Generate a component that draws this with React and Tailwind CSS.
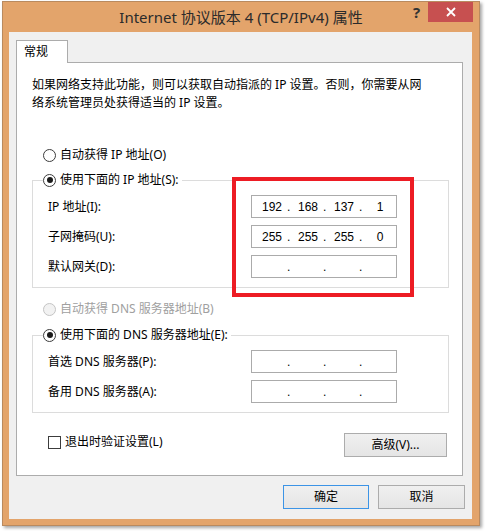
import React from "react";

const Radio = ({ checked, disabled }) => (
	<span
		className={`flex h-[13px] w-[13px] shrink-0 items-center justify-center rounded-full border ${
			disabled ? "border-[#c4c4c4] bg-[#f2f2f2]" : "border-[#3c3c3c] bg-white"
		}`}
	>
		{checked && <span className="h-[6px] w-[6px] rounded-full bg-[#1a1a1a]" />}
	</span>
);

const RadioRow = ({ label, checked, disabled }) => (
	<span className={`flex h-4 items-center gap-[4px] leading-4 ${disabled ? "text-[#a0a0a0]" : "text-black"}`}>
		<Radio checked={checked} disabled={disabled} />
		<span>{label}</span>
	</span>
);

const IpField = ({ value }) => {
	const parts = value ? value.split(".") : ["", "", "", ""];
	return (
		<div className="flex h-[23px] w-[146px] items-center border border-[#ababab] bg-white pl-[9px] font-['Liberation_Sans',sans-serif] text-[12px] text-black">
			{parts.map((p, i) => (
				<React.Fragment key={i}>
					<span className="w-[22px] text-center">{p}</span>
					{i < 3 && <span className="w-[14px] pl-[4px] text-left">.</span>}
				</React.Fragment>
			))}
		</div>
	);
};

const FieldRow = ({ label, value }) => (
	<div className="flex items-center justify-between">
		<span className="leading-4">{label}</span>
		<IpField value={value} />
	</div>
);

const Group = ({ legend, rows }) => (
	<fieldset className="ml-[15px] w-[417px] border border-[#dcdcdc] pb-[9px] pl-[15px] pr-[51px] pt-[7px]">
		<legend className="ml-[-5px] bg-white pr-[3px]">
			<RadioRow label={legend} checked />
		</legend>
		<div className="flex flex-col gap-[7px]">
			{rows.map((r) => (
				<FieldRow key={r.label} label={r.label} value={r.value} />
			))}
		</div>
	</fieldset>
);

const Button = ({ children, width, primary }) => (
	<button
		className={`flex h-[24px] items-center justify-center border bg-gradient-to-b from-[#f0f0f0] to-[#e5e5e5] text-[12px] text-black ${width} ${
			primary ? "border-[#3c94e6]" : "border-[#acacac]"
		}`}
	>
		{children}
	</button>
);

export default function App() {
	return (
		<div className="relative h-[531px] w-[485px] bg-white pl-[2px] pt-[1px] font-['Noto_Sans','Noto_Sans_CJK_SC',sans-serif] text-[12px] text-black">
			<div className="flex h-[525px] w-[478px] flex-col border border-[#b98a5f] bg-[#e3a46b] shadow-[2px_2px_3px_rgba(0,0,0,0.35)]">
				{/* title bar */}
				<div className="flex h-[30px] items-start">
					<div className="w-[74px]" />
					<div className="flex h-[30px] flex-1 items-center justify-center text-[15px] text-[#2b2b2b]">
						Internet 协议版本 4 (TCP/IPv4) 属性
					</div>
					<div className="flex w-[74px] items-start">
						<span className="mt-[1px] w-[23px] text-center text-[15px] font-bold leading-[18px] text-[#333]">?</span>
						<span className="flex h-[20px] w-[45px] items-center justify-center bg-[#c75050]">
							<svg width="10" height="10" viewBox="0 0 10 10">
								<path d="M1 1L9 9M9 1L1 9" stroke="white" strokeWidth="1.8" />
							</svg>
						</span>
					</div>
				</div>

				{/* client */}
				<div className="ml-[6px] flex h-[487px] w-[463px] flex-col bg-[#f0f0f0] pl-[7px] pt-[8px]">
					<div className="relative z-10 -mb-[1px] flex h-[23px] w-[52px] items-center border border-b-0 border-[#acacac] bg-white pl-[7px]">
						常规
					</div>
					<div className="flex h-[414px] w-[447px] flex-col border border-[#acacac] bg-white">
						<p className="ml-[15px] mt-[13px] leading-[18px]">
							如果网络支持此功能，则可以获取自动指派的 IP 设置。否则，你需要从网
							<br />
							络系统管理员处获得适当的 IP 设置。
						</p>

						<div className="ml-[26px] mt-[35px]">
							<RadioRow label="自动获得 IP 地址(O)" />
						</div>
						<div className="mt-[9px]">
							<Group
								legend="使用下面的 IP 地址(S):"
								rows={[
									{ label: "IP 地址(I):", value: "192.168.137.1" },
									{ label: "子网掩码(U):", value: "255.255.255.0" },
									{ label: "默认网关(D):", value: "" },
								]}
							/>
						</div>

						<div className="ml-[26px] mt-[13px]">
							<RadioRow label="自动获得 DNS 服务器地址(B)" disabled />
						</div>
						<div className="mt-[10px]">
							<Group
								legend="使用下面的 DNS 服务器地址(E):"
								rows={[
									{ label: "首选 DNS 服务器(P):", value: "" },
									{ label: "备用 DNS 服务器(A):", value: "" },
								]}
							/>
						</div>

						<div className="mt-[20px] flex items-start justify-between pl-[31px] pr-[15px]">
							<span className="mt-[1px] flex items-center gap-[4px] leading-4">
								<span className="h-[13px] w-[13px] border border-[#3c3c3c] bg-white" />
								退出时验证设置(L)
							</span>
							<Button width="w-[103px]">高级(V)...</Button>
						</div>
					</div>

					<div className="mt-[9px] flex justify-end gap-[9px] pr-[7px]">
						<Button width="w-[86px]" primary>
							确定
						</Button>
						<Button width="w-[87px]">取消</Button>
					</div>
				</div>
			</div>
			{/* red highlight around the IP fields */}
			<div className="pointer-events-none absolute left-[232px] top-[177px] h-[120px] w-[182px] border-[4px] border-[#ed1c24]" />
		</div>
	);
}
